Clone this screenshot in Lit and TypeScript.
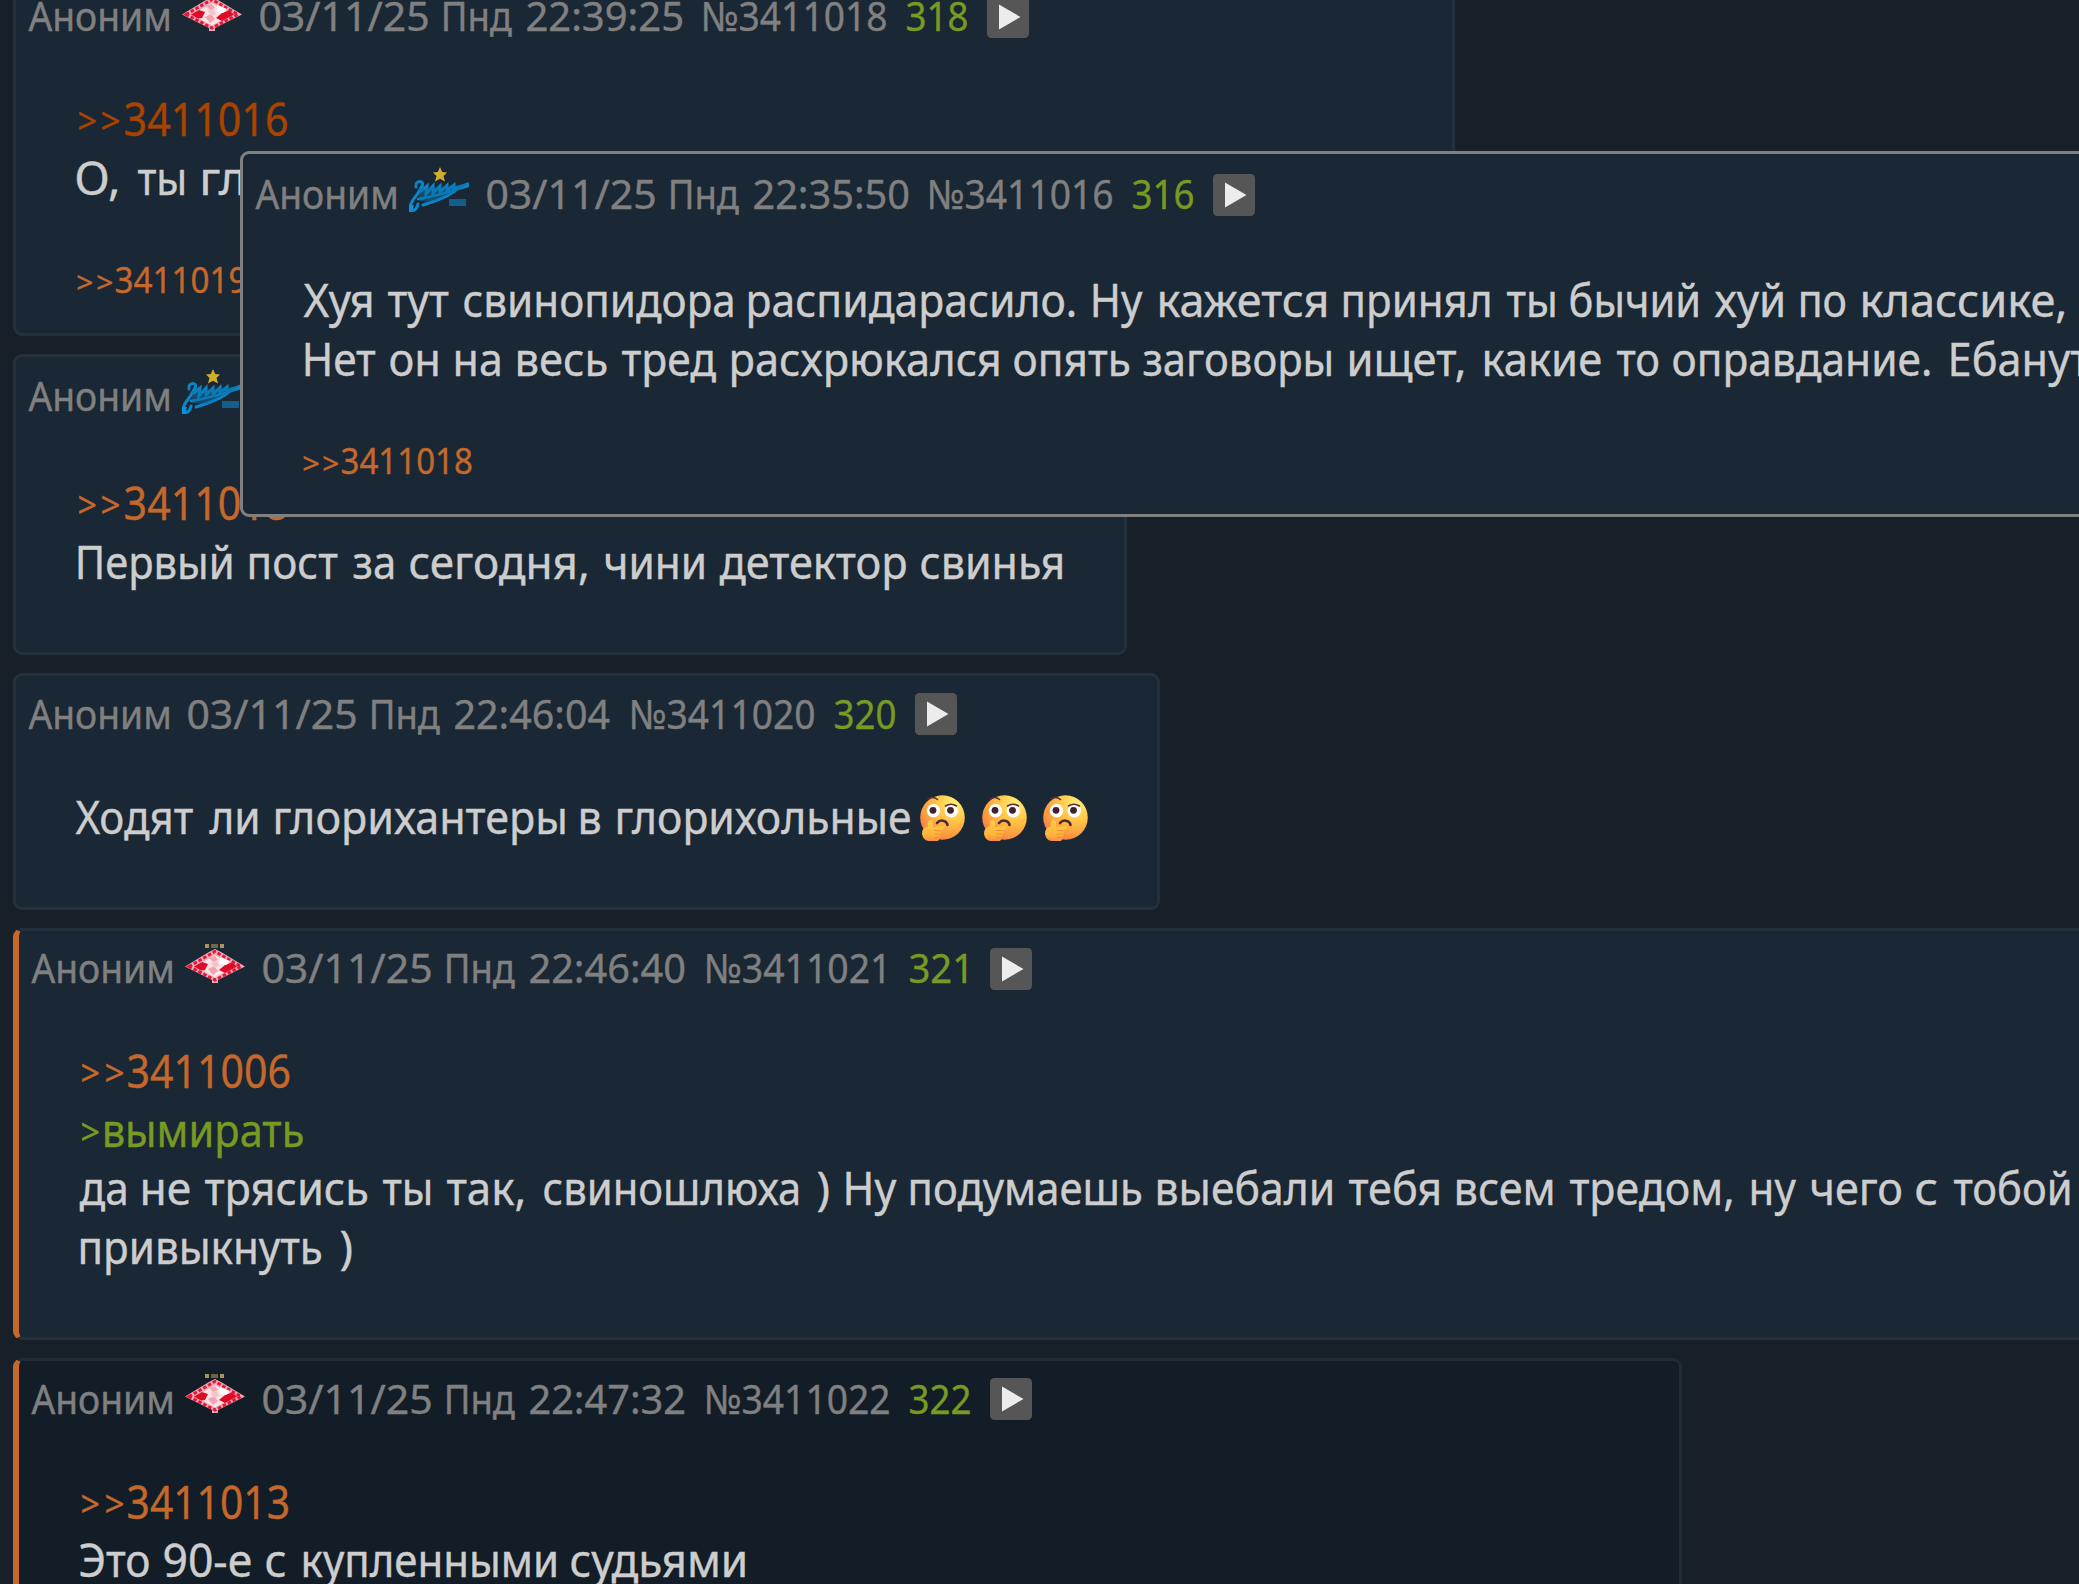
import { LitElement, html, css } from "lit";
import { customElement, property } from "lit/decorators.js";

/* A line is a list of words; `at` holds the left and right ink edge of each word. */
type Line = { words: string; at: number[]; k?: string; quote?: number };
type Post = {
  id: string; date: string; num: string; ord: string; icon: "" | "spartak" | "zenit";
  numW?: number; ordW?: number; width: number; cls: string; lines: Line[]; refs?: Line; emoji?: boolean;
};

const FONT = '"Noto Sans", "Open Sans", sans-serif';
const ctx = document.createElement("canvas").getContext("2d")!;

/* One run of text whose drawn extent is exactly `w` pixels wide. */
@customElement("fit-run")
class FitRun extends LitElement {
  @property() text = "";
  @property({ type: Number }) w = 0;
  @property({ type: Number }) size = 45;
  @property({ type: Number }) dy = 1;
  static styles = css`
    :host { display: block; flex: none; white-space: pre; }
    .run { display: inline-block; transform-origin: 0 50%; white-space: pre; -webkit-text-stroke: 0.4px currentColor; }
  `;
  render() {
    ctx.font = `${this.size}px ${FONT}`;
    const m = ctx.measureText(this.text);
    const s = this.w / (m.actualBoundingBoxRight + m.actualBoundingBoxLeft);
    this.style.width = `${this.w}px`;
    this.style.fontSize = `${this.size}px`;
    return html`<span class="run" style="transform: translate(${m.actualBoundingBoxLeft * s - 0.6}px, ${this.dy}px) scaleX(${s})">${this.text}</span>`;
  }
}

const spartak = html`<svg class="spartak" width="60" height="39" viewBox="0 0 60 39">
  <g fill="#a8965a"><rect x="20" y="0" width="4" height="4"/><rect x="26" y="0" width="7" height="4" opacity=".6"/><rect x="35" y="0" width="4" height="4"/></g>
  <path d="M0 22.500 24 8 30 5 36 8 60 22.500 33 36V39H27V36Z" fill="#f0a9b4"/>
  <path d="M4 22.500 30 7.500 56 22.500 30 36Z" fill="none" stroke="#e0183a" stroke-width="3" stroke-dasharray="3.500 2"/>
  <path d="M10 22.500 30 11 50 22.500 30 33.500Z" fill="#fbe3e6"/>
  <path d="M9 22.500 17 18 23 20 20 26 16 26.500Z" fill="#de0a28"/>
  <path d="M34 26 40 21 47 18.500 52 22.500 40 29Z" fill="#de0a28"/>
  <path d="M24 14 30 12 33 16 28 18ZM23 25 29 22 33 27 28 31Z" fill="#f2a3b0"/>
  <path d="M26 19 32 17 34 22 29 24Z" fill="#f7c3ca"/>
  <path d="M35 13 45 17 41 21 35 20Z" fill="#fff"/>
</svg>`;

const zenit = html`<svg class="zenit" width="60" height="45" viewBox="0 0 60 45">
  <path d="M31 0 33.200 5 38 5.500 34.500 9 36 14.500 31 11.800 26 14.500 27.500 9 24 5.500 28.800 5Z" fill="#d0ae2c"/>
  <g fill="none" stroke="#0b86c9" stroke-linecap="round">
    <path d="M7 20Q6 15 11 14.500 15 15 13 19" stroke-width="3"/>
    <path d="M13 19Q9 27 4 33 0 39 1 44 8 44 9 37" stroke-width="3"/>
    <path d="M12 24 18 19 17 27 24 19 24 26 31 19 31 25 38 18.500 38 23.500 45 18 45 22 59 17" stroke-width="3"/>
    <path d="M9 32 20 30 36 26 59 19" stroke-width="2.500"/>
    <path d="M14 38 26 34 38 29 46 24" stroke-width="3"/>
  </g>
  <path d="M10 22 58 17 52 22 24 35 10 34Z" fill="#0b6ea6" opacity=".5"/>
  <path d="M0 38H5L3 45H0Z" fill="#0a93dc"/>
  <rect x="40" y="32" width="17" height="7" fill="#135f8c"/>
</svg>`;

const thinking = html`<svg class="emoji" width="45" height="46" viewBox="0 0 45 46">
  <defs>
    <radialGradient id="f" cx=".75" cy=".2" r=".95"><stop offset="0" stop-color="#fff176"/><stop offset=".45" stop-color="#ffc043"/><stop offset=".8" stop-color="#fb923f"/><stop offset="1" stop-color="#ef6a6a"/></radialGradient>
    <linearGradient id="h" x1="0" y1="0" x2="0" y2="1"><stop offset="0" stop-color="#ffd04a"/><stop offset=".7" stop-color="#fdb43a"/><stop offset="1" stop-color="#f98c48"/></linearGradient>
  </defs>
  <circle cx="22.500" cy="22.500" r="22.300" fill="url(#f)"/>
  <circle cx="13.500" cy="15.800" r="6.700" fill="#fff"/><circle cx="31.300" cy="15.800" r="6.700" fill="#fff"/>
  <circle cx="13" cy="15.300" r="3.400" fill="#43202f"/><circle cx="30.500" cy="15.300" r="3.400" fill="#43202f"/>
  <path d="M8 4Q13 .8 17.500 4.500M25.500 11Q31 7.500 36.500 11" fill="none" stroke="#5a2b33" stroke-width="1.500" stroke-linecap="round"/>
  <path d="M17 28Q20 24.500 24 26 27 27 27.500 30" fill="none" stroke="#4f2a38" stroke-width="2.600" stroke-linecap="round"/>
  <path d="M8.500 26Q10.500 23.500 12.500 26L13.500 32 22 31Q25 31.500 24 33.500L20 35.500Q22 37 20.500 39 21 41 19.500 42 20 44.500 18 46H9Q3 45.500 2 39 1.500 33 7.500 31.500Z" fill="url(#h)"/>
  <path d="M14 35.500H20M14 39H20M14 42.500H19" stroke="#ef9035" stroke-width="1"/>
</svg>`;

const play = html`<svg class="play" width="42" height="42" viewBox="0 0 42 42">
  <rect width="42" height="42" rx="4.500" fill="#565656"/><path d="M12 8.500 33.500 21 12 33.500Z" fill="#ececec"/>
</svg>`;

const POSTS: Post[] = [
  { id: "p318", icon: "spartak", date: "03/11/25 Пнд 22:39:25", num: "№3411018", ord: "318", width: 1442, cls: "",
    lines: [
      { words: ">>3411016", at: [78.5, 95.5, 102, 119.5, 125.5, 287], k: "visited", quote: 2 },
      { words: "О, ты гл", at: [77, 118, 137.5, 184.5, 203, 244] },
    ],
    refs: { words: ">>3411019", at: [78, 92.5, 97.5, 112, 115.5, 246], quote: 2 } },
  { id: "p319", icon: "zenit", date: "03/11/25 Пнд 22:43:11", num: "№3411019", ord: "319", width: 1114, cls: "tall",
    lines: [
      { words: ">>3411018", at: [78.5, 95.5, 102, 119.5, 125.5, 287], k: "link", quote: 2 },
      { words: "Первый пост за сегодня, чини детектор свинья",
        at: [78.5, 232, 249.5, 338, 354, 394, 410.5, 587, 606, 705, 720, 907, 922, 1063] },
    ] },
  { id: "p320", icon: "", date: "03/11/25 Пнд 22:46:04", num: "№3411020", ord: "320", width: 1147, cls: "", emoji: true,
    lines: [
      { words: "Ходят ли глорихантеры в глорихольные", at: [76, 194, 210, 258.5, 275.5, 565, 581, 601, 617.5, 910] },
    ] },
  { id: "p321", icon: "spartak", date: "03/11/25 Пнд 22:46:40", num: "№3411021", ord: "321", numW: 177.5, ordW: 57, width: 2200, cls: "mine",
    lines: [
      { words: ">>3411006", at: [82, 99, 105.5, 123, 129, 290], k: "link", quote: 2 },
      { words: ">вымирать", at: [82, 99, 105, 303.5], k: "quote", quote: 1 },
      { words: "да не трясись ты так, свиношлюха ) Ну подумаешь выебали тебя всем тредом, ну чего с тобой",
        at: [80, 126.5, 143, 190, 205, 368, 383, 431, 447, 524, 545, 799, 818, 829, 847, 897, 911, 1142, 1158, 1333,
          1349, 1440, 1457, 1553, 1569.5, 1732, 1752, 1796.5, 1812, 1902, 1917, 1937.5, 1953.5, 2070] },
      { words: "привыкнуть )", at: [81, 322, 341, 352] },
    ] },
  { id: "p322", icon: "spartak", date: "03/11/25 Пнд 22:47:32", num: "№3411022", ord: "322", width: 1669, cls: "mine dim",
    lines: [
      { words: ">>3411013", at: [82, 99, 105.5, 123, 129, 289], k: "link", quote: 2 },
      { words: "Это 90-е с купленными судьями", at: [80.5, 149, 165, 251, 267, 286, 304, 557, 572, 746] },
    ] },
];

const POPUP: Post = { id: "p316", icon: "zenit", date: "03/11/25 Пнд 22:35:50", num: "№3411016", ord: "316", width: 2300, cls: "tall popup",
  lines: [
    { words: "Хуя тут свинопидора распидарасило. Ну кажется принял ты бычий хуй по классике,",
      at: [303.5, 372, 388, 449.5, 464.5, 733, 749, 1075, 1094, 1143, 1160, 1327, 1344, 1490, 1506.5, 1555, 1571, 1699,
        1715, 1784, 1801, 1846, 1863, 2065] },
    { words: "Нет он на весь тред расхрюкался опять заговоры ищет, какие то оправдание. Ебанут",
      at: [305.5, 376, 391, 438, 455.5, 500, 517.5, 607, 622, 716.5, 732, 999.500, 1015, 1130, 1144, 1332, 1350, 1464,
        1485, 1601, 1617, 1659, 1674, 1930, 1952, 2091] },
  ],
  refs: { words: ">>3411018", at: [304, 319, 324, 338.5, 342, 472], quote: 2 } };

@customElement("app-root")
class AppRoot extends LitElement {
  static styles = css`
    :host { display: block; height: 1584px; overflow: hidden; background: #172029; position: relative;
      font-family: "Noto Sans", "Open Sans", sans-serif; color: #cdcdcd; }
    .thread { display: flex; flex-direction: column; align-items: flex-start; gap: 18px; margin-top: -24px; padding-left: 13px; }
    .post { box-sizing: border-box; flex: none; background: #1a2734; border: 3px solid #24303c; border-radius: 9px; padding-bottom: 62px; }
    .post.has-refs { padding-bottom: 0; }
    .mine { border-left: 6px solid #c4682b; }
    .dim { background: #131d27; border-top-color: #202b35; border-right-color: #202b35; }
    .popup { position: absolute; left: 240px; top: 151px; border-color: #808080; }
    .head { display: flex; align-items: flex-start; box-sizing: border-box; height: 110.300px; padding: 11.300px 0 0 12.500px; font-size: 40.500px; line-height: 50px; color: #808080; }
    .tall .head { height: 116.300px; padding-top: 13.300px; }
    .popup .head { padding-top: 14.300px; }
    .ord { color: #789922; }
    .line { display: flex; height: 58.500px; font-size: 45px; line-height: 58.500px; }
    .link, .refs { color: #c4682b; }
    .visited { color: #a84300; }
    .quote { color: #789922; }
    .refs { display: flex; height: 96.700px; padding-top: 49.300px; box-sizing: border-box; margin-bottom: 30px; font-size: 36px; line-height: 46px; }
    .play { flex: none; margin-top: 5.700px; }
    .spartak { flex: none; margin-top: 1.700px; filter: blur(0.5px); }
    .zenit { flex: none; margin-top: -1px; filter: blur(0.6px); }
    .emojis { display: flex; gap: 16.700px; padding: 8.500px 0 0 10px; }
    .emoji { flex: none; }
    .gap { flex: none; white-space: pre; overflow: hidden; height: 40px; }
  `;

  private gap(n: number, s = "") {
    return html`<span class="gap" style="width:${n}px">${s}</span>`;
  }

  private run(t: string, w: number, size: number, k = "", dy = 1) {
    return html`<fit-run class=${k} .text=${t} .w=${w} .size=${size} .dy=${dy}></fit-run>`;
  }

  private words(line: Line, origin: number, size: number) {
    const q = line.quote ?? 0;
    const marks = Array<string>(q).fill(">");
    const parts = [...marks, ...line.words.slice(q).split(" ")];
    let x = origin;
    return parts.map((t, i) => {
      const [a, b] = [line.at[2 * i], line.at[2 * i + 1]];
      const space = a - x;
      x = b;
      const mark = i < q;
      return html`${this.gap(space, i > q ? " " : "")}${this.run(t, b - a, mark ? size * 0.8 : size, line.k ?? "", mark ? 3.2 : 1)}`;
    });
  }

  private post(p: Post) {
    const popup = p.cls.includes("popup");
    const origin = popup ? 243 : p.cls.includes("mine") ? 19 : 16;
    const [day, week, time] = p.date.split(" ");
    const numW = p.numW ?? 183;
    const ordW = p.ordW ?? 61;
    return html`<article class="post ${p.cls} ${p.refs ? "has-refs" : ""}" id=${p.id} style="width:${p.width}px">
      <header class="head">
        ${this.run("Аноним", 140.5, 40.5)}
        ${p.icon ? html`${this.gap(13)}${p.icon === "zenit" ? zenit : spartak}${this.gap(18)}` : this.gap(19)}
        ${this.run(day, 168, 40.5)}${this.gap(15.5, " ")}${this.run(week, 69, 40.5)}${this.gap(14, " ")}${this.run(time, 155.5, 40.5)}${this.gap(popup ? 20.5 : 21.5, " ")}
        ${this.run(p.num, numW, 40.5)}${this.gap(20.5 + 183 - numW, " ")}
        ${this.run(p.ord, ordW, 40.5, "ord")}${this.gap(19 + 61 - ordW, " ")}
        ${play}
      </header>
      ${p.lines.map((line) => html`<div class="line">
        ${this.words(line, origin, 45)}
        ${p.emoji ? html`<span class="emojis">${thinking}${thinking}${thinking}</span>` : ""}
      </div>`)}
      ${p.refs ? html`<div class="refs">${this.words(p.refs, origin, 36)}</div>` : ""}
    </article>`;
  }

  render() {
    return html`<main class="thread">${POSTS.map((p) => this.post(p))}</main>${this.post(POPUP)}`;
  }
}
